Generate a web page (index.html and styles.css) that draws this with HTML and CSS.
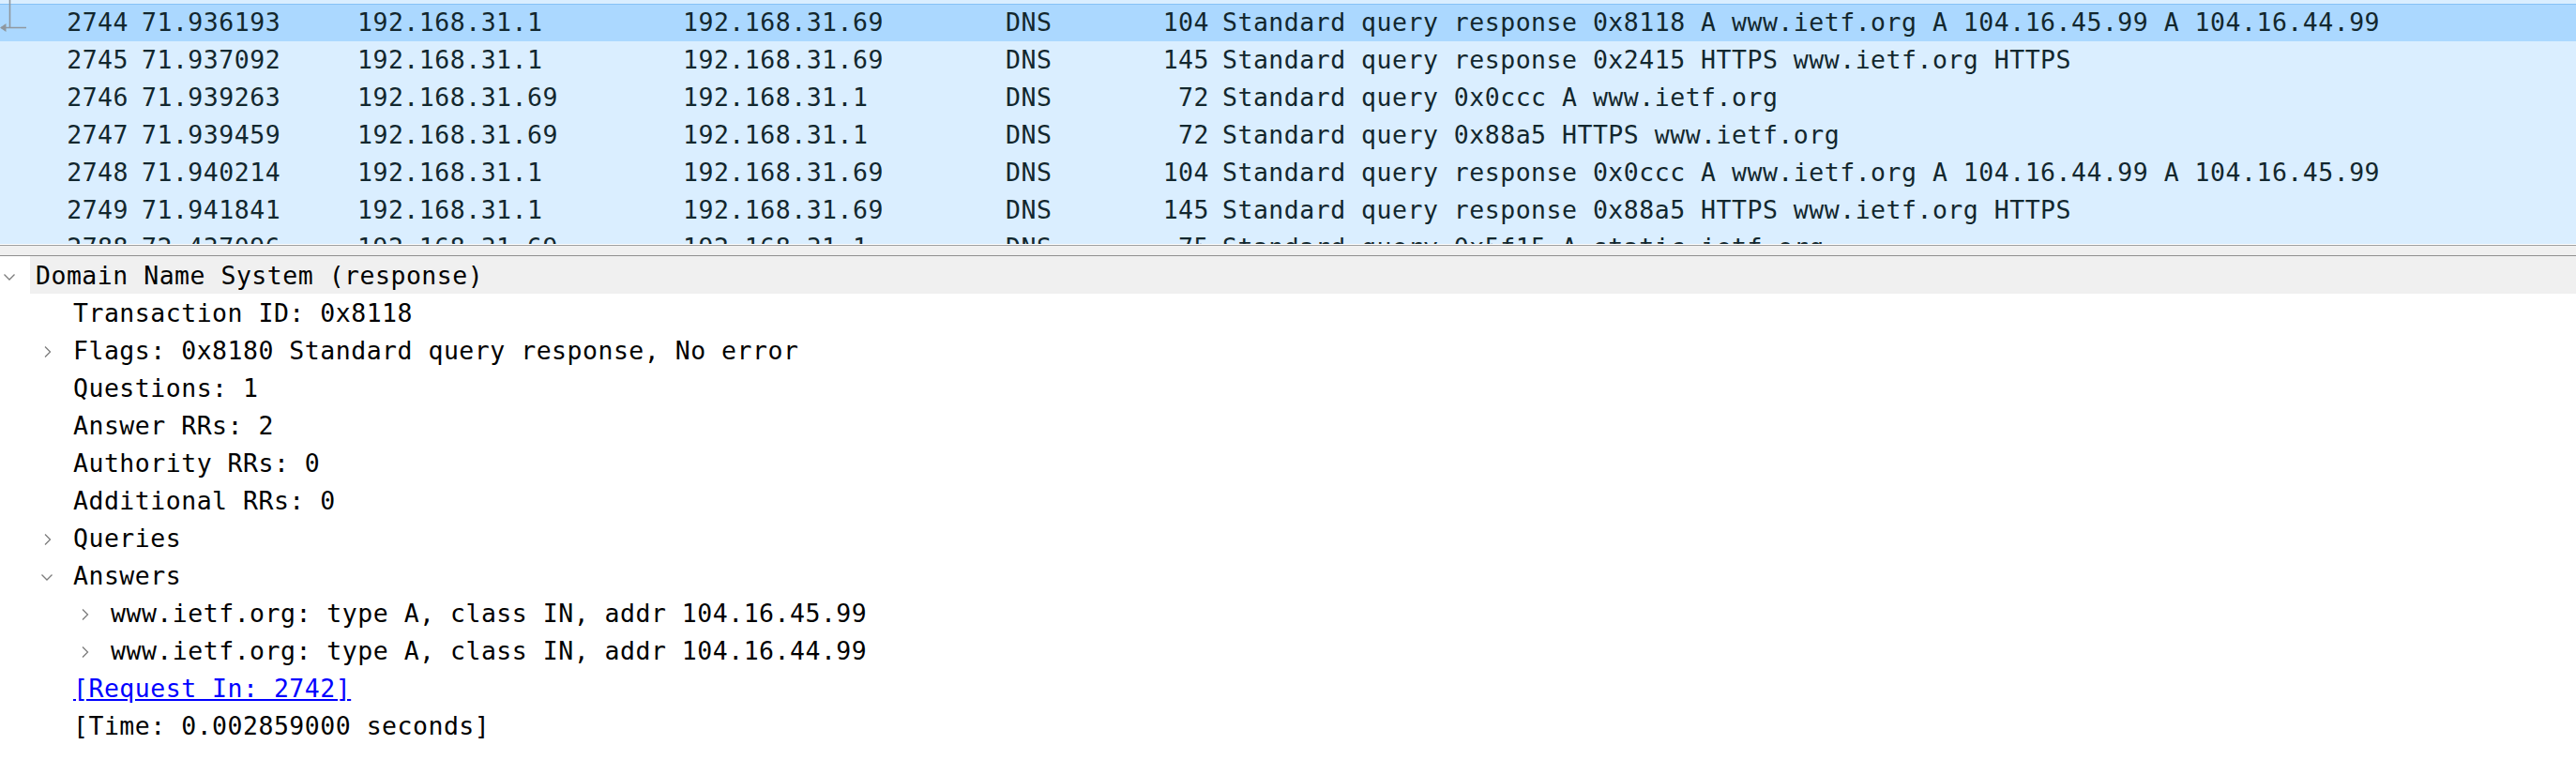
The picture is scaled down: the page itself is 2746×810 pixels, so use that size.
FILE: index.html
```html
<!DOCTYPE html>
<html>
<head>
<meta charset="utf-8">
<title>Wireshark DNS</title>
<link rel="stylesheet" href="styles.css">
</head>
<body>
<div class="plist">
  <div class="prow sel"><div class="c no"><svg class="rel" width="30" height="34" viewBox="0 0 30 34"><path d="M10.5 0 V29.5 M1 29.5 H28" stroke="#8f979e" stroke-width="1.6" fill="none"/><path d="M0 29.5 L6.5 25 L6.5 34 Z" fill="#8f979e"/></svg>2744</div><div class="c time">71.936193</div><div class="c src">192.168.31.1</div><div class="c dst">192.168.31.69</div><div class="c proto">DNS</div><div class="c len">104</div><div class="c info">Standard query response 0x8118 A www.ietf.org A 104.16.45.99 A 104.16.44.99</div></div>
  <div class="prow"><div class="c no">2745</div><div class="c time">71.937092</div><div class="c src">192.168.31.1</div><div class="c dst">192.168.31.69</div><div class="c proto">DNS</div><div class="c len">145</div><div class="c info">Standard query response 0x2415 HTTPS www.ietf.org HTTPS</div></div>
  <div class="prow"><div class="c no">2746</div><div class="c time">71.939263</div><div class="c src">192.168.31.69</div><div class="c dst">192.168.31.1</div><div class="c proto">DNS</div><div class="c len">72</div><div class="c info">Standard query 0x0ccc A www.ietf.org</div></div>
  <div class="prow"><div class="c no">2747</div><div class="c time">71.939459</div><div class="c src">192.168.31.69</div><div class="c dst">192.168.31.1</div><div class="c proto">DNS</div><div class="c len">72</div><div class="c info">Standard query 0x88a5 HTTPS www.ietf.org</div></div>
  <div class="prow"><div class="c no">2748</div><div class="c time">71.940214</div><div class="c src">192.168.31.1</div><div class="c dst">192.168.31.69</div><div class="c proto">DNS</div><div class="c len">104</div><div class="c info">Standard query response 0x0ccc A www.ietf.org A 104.16.44.99 A 104.16.45.99</div></div>
  <div class="prow"><div class="c no">2749</div><div class="c time">71.941841</div><div class="c src">192.168.31.1</div><div class="c dst">192.168.31.69</div><div class="c proto">DNS</div><div class="c len">145</div><div class="c info">Standard query response 0x88a5 HTTPS www.ietf.org HTTPS</div></div>
  <div class="prow"><div class="c no">2788</div><div class="c time">72.437096</div><div class="c src">192.168.31.69</div><div class="c dst">192.168.31.1</div><div class="c proto">DNS</div><div class="c len">75</div><div class="c info">Standard query 0x5f15 A static.ietf.org</div></div>
</div>
<div class="splitter"><div class="splitter-bar"></div></div>
<div class="tree">
  <div class="node hl">
    <div class="tog"><svg width="12" height="12" viewBox="0 0 12 12"><polyline points="0.5,3.5 6,9 11.5,3.5" class="chev"/></svg></div>
    <div class="lbl">Domain Name System (response)</div>
  </div>
  <div class="node l1"><div class="tog"></div><div class="lbl">Transaction ID: 0x8118</div></div>
  <div class="node l1">
    <div class="tog"><svg width="12" height="12" viewBox="0 0 12 12"><polyline points="4,0.5 9.5,6 4,11.5" class="chev"/></svg></div>
    <div class="lbl">Flags: 0x8180 Standard query response, No error</div>
  </div>
  <div class="node l1"><div class="tog"></div><div class="lbl">Questions: 1</div></div>
  <div class="node l1"><div class="tog"></div><div class="lbl">Answer RRs: 2</div></div>
  <div class="node l1"><div class="tog"></div><div class="lbl">Authority RRs: 0</div></div>
  <div class="node l1"><div class="tog"></div><div class="lbl">Additional RRs: 0</div></div>
  <div class="node l1">
    <div class="tog"><svg width="12" height="12" viewBox="0 0 12 12"><polyline points="4,0.5 9.5,6 4,11.5" class="chev"/></svg></div>
    <div class="lbl">Queries</div>
  </div>
  <div class="node l1">
    <div class="tog"><svg width="12" height="12" viewBox="0 0 12 12"><polyline points="0.5,3.5 6,9 11.5,3.5" class="chev"/></svg></div>
    <div class="lbl">Answers</div>
  </div>
  <div class="node l2">
    <div class="tog"><svg width="12" height="12" viewBox="0 0 12 12"><polyline points="4,0.5 9.5,6 4,11.5" class="chev"/></svg></div>
    <div class="lbl">www.ietf.org: type A, class IN, addr 104.16.45.99</div>
  </div>
  <div class="node l2">
    <div class="tog"><svg width="12" height="12" viewBox="0 0 12 12"><polyline points="4,0.5 9.5,6 4,11.5" class="chev"/></svg></div>
    <div class="lbl">www.ietf.org: type A, class IN, addr 104.16.44.99</div>
  </div>
  <div class="node l1"><div class="tog"></div><div class="lbl"><a class="link" href="#">[Request In: 2742]</a></div></div>
  <div class="node l1"><div class="tog"></div><div class="lbl">[Time: 0.002859000 seconds]</div></div>
</div>
</body>
</html>
```

FILE: styles.css
```css
html, body {
  margin: 0;
  padding: 0;
  background: #ffffff;
}
body {
  width: 2746px;
  height: 810px;
  overflow: hidden;
  font-family: "DejaVu Sans Mono", "Liberation Mono", monospace;
  font-size: 26.5px;
  letter-spacing: 0.5px;
}
.plist {
  height: 260px;
  box-sizing: border-box;
  padding-top: 4px;
  overflow: hidden;
  background: #daeeff;
  color: #12272e;
}
.prow {
  display: flex;
  height: 40px;
  line-height: 40px;
  white-space: pre;
}
.prow.sel {
  background: #abd8ff;
  box-shadow: inset 0 1px 0 #86c2f6;
}
.c {
  box-sizing: border-box;
  padding: 0 7px;
  flex: none;
  overflow: hidden;
}
.no { width: 144px; text-align: right; position: relative; overflow: visible; }
.time { width: 230px; }
.src { width: 347px; }
.dst { width: 344px; }
.proto { width: 120px; }
.len { width: 111px; text-align: right; }
.info { flex: 1; }
.rel {
  position: absolute;
  left: 0;
  top: -4px;
}
.splitter {
  border-top: 1px solid #ffffff;
}
.splitter-bar {
  height: 10px;
  background: #f0f0f0;
  border-top: 1px solid #a0a0a0;
  border-bottom: 1px solid #8f8f8f;
}
.tree {
  color: #000000;
}
.node {
  display: flex;
  height: 40px;
  align-items: center;
}
.node.l1 { padding-left: 40px; }
.node.l2 { padding-left: 80px; }
.tog {
  width: 32px;
  flex: none;
  box-sizing: border-box;
  padding-left: 4px;
  display: flex;
  align-items: center;
  height: 40px;
}
.tog svg { display: block; margin-top: 4px; }
.chev {
  fill: none;
  stroke: #7c7c7c;
  stroke-width: 1.3;
}
.lbl {
  flex: 1;
  height: 40px;
  box-sizing: border-box;
  padding-top: 2px;
  line-height: 38px;
  padding-left: 6px;
  white-space: pre;
}
.node.hl .lbl {
  background: #f0f0f0;
}
.link {
  color: #0000ff;
  text-decoration: underline;
}
```
